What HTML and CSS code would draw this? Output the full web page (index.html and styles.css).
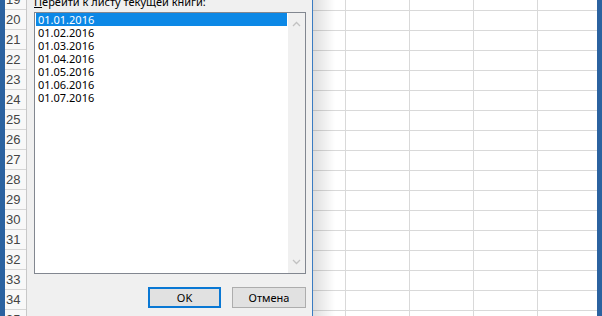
FILE: index.html
```html
<!DOCTYPE html>
<html>
	<head>
		<meta charset="UTF-8">
		<title>Переход к листу</title>
		<link rel="stylesheet" href="styles.css">
	</head>
	<body>
		<div class="edge"></div>

		<ul class="rowhead">
			<li>19</li>
			<li>20</li>
			<li>21</li>
			<li>22</li>
			<li>23</li>
			<li>24</li>
			<li>25</li>
			<li>26</li>
			<li>27</li>
			<li>28</li>
			<li>29</li>
			<li>30</li>
			<li>31</li>
			<li>32</li>
			<li>33</li>
			<li>34</li>
			<li>35</li>
		</ul>

		<div class="dialog">
			<div class="label"><u>П</u>ерейти к листу текущей книги:</div>
			<div class="listbox">
				<ul class="items">
					<li class="sel">01.01.2016</li>
					<li>01.02.2016</li>
					<li>01.03.2016</li>
					<li>01.04.2016</li>
					<li>01.05.2016</li>
					<li>01.06.2016</li>
					<li>01.07.2016</li>
				</ul>
				<div class="scroll">
					<svg width="9" height="6" viewBox="0 0 9 6"><path d="M1 5 L4.5 1.5 L8 5" fill="none" stroke="#c2c2c2" stroke-width="1.3"/></svg>
					<svg width="9" height="6" viewBox="0 0 9 6"><path d="M1 1 L4.5 4.5 L8 1" fill="none" stroke="#c2c2c2" stroke-width="1.3"/></svg>
				</div>
			</div>
			<div class="bts">
				<button class="bt default">OK</button>
				<button class="bt">Отмена</button>
			</div>
		</div>

		<div class="sheet"></div>

		<div class="edge"></div>
	</body>
</html>
```

FILE: styles.css
```css
*{
	margin: 0;
	padding: 0;
}
body{
	width: 602px;
	height: 316px;
	overflow: hidden;
	display: flex;
	background: #fff;
	font-family: "Noto Sans", "Open Sans", sans-serif;
	font-size: 11px;
	color: #000;
}

.edge{
	width: 5px;
	flex: none;
	background: #2b62a0;
}

/* номера строк */
.rowhead{
	width: 21px;
	flex: none;
	list-style: none;
	margin-top: -10px;
	border-right: 1px solid #c8c8c8;
	background: #f8f8f8;
}
.rowhead li{
	height: 19px;
	border-bottom: 1px solid #d6d6d6;
	font-family: "Liberation Sans", sans-serif;
	font-size: 13px;
	line-height: 20px;
	color: #444;
	padding-left: 1px;
}

/* окно */
.dialog{
	width: 272px;
	flex: none;
	padding: 0 6px 0 7px;
	background: #f0f0f0;
	border-right: 1px solid #3a7cc2;
	display: flex;
	flex-direction: column;
}
.label{
	line-height: 13px;
	margin-top: -5px;
	height: 13px;
	white-space: nowrap;
}
.listbox{
	margin-top: 4px;
	height: 260px;
	border: 1px solid #828790;
	background: #fff;
	display: flex;
}
.items{
	flex: 1;
	list-style: none;
	padding: 0 1px 0 1px;
}
.items li{
	height: 13px;
	line-height: 13px;
	padding-left: 2px;
}
.items li.sel{
	background: #0c88e6;
	color: #fff;
}
.scroll{
	width: 17px;
	background: #f0f0f0;
	display: flex;
	flex-direction: column;
	justify-content: space-between;
	align-items: center;
	padding: 8px 0 8px;
}
.scroll svg{
	display: block;
}

.bts{
	margin-top: 13px;
	display: flex;
	justify-content: flex-end;
	gap: 11px;
}
.bt{
	width: 74px;
	height: 21px;
	background: #e1e1e1;
	border: 1px solid #adadad;
	font-family: inherit;
	font-size: 11px;
	color: #000;
}
.bt.default{
	width: 73px;
	border: 2px solid #0a78d4;
}

/* лист */
.sheet{
	flex: 1;
	background-image:
		linear-gradient(to right, rgba(0,0,0,.13), rgba(0,0,0,0)),
		linear-gradient(to right, #d9d9d9 1px, transparent 1px),
		linear-gradient(to bottom, #d9d9d9 1px, transparent 1px);
	background-size: 22px 100%, 64px 20px, 64px 20px;
	background-repeat: no-repeat, repeat, repeat;
	background-position: 0 0, 32px 0, 0 10px;
}
```
